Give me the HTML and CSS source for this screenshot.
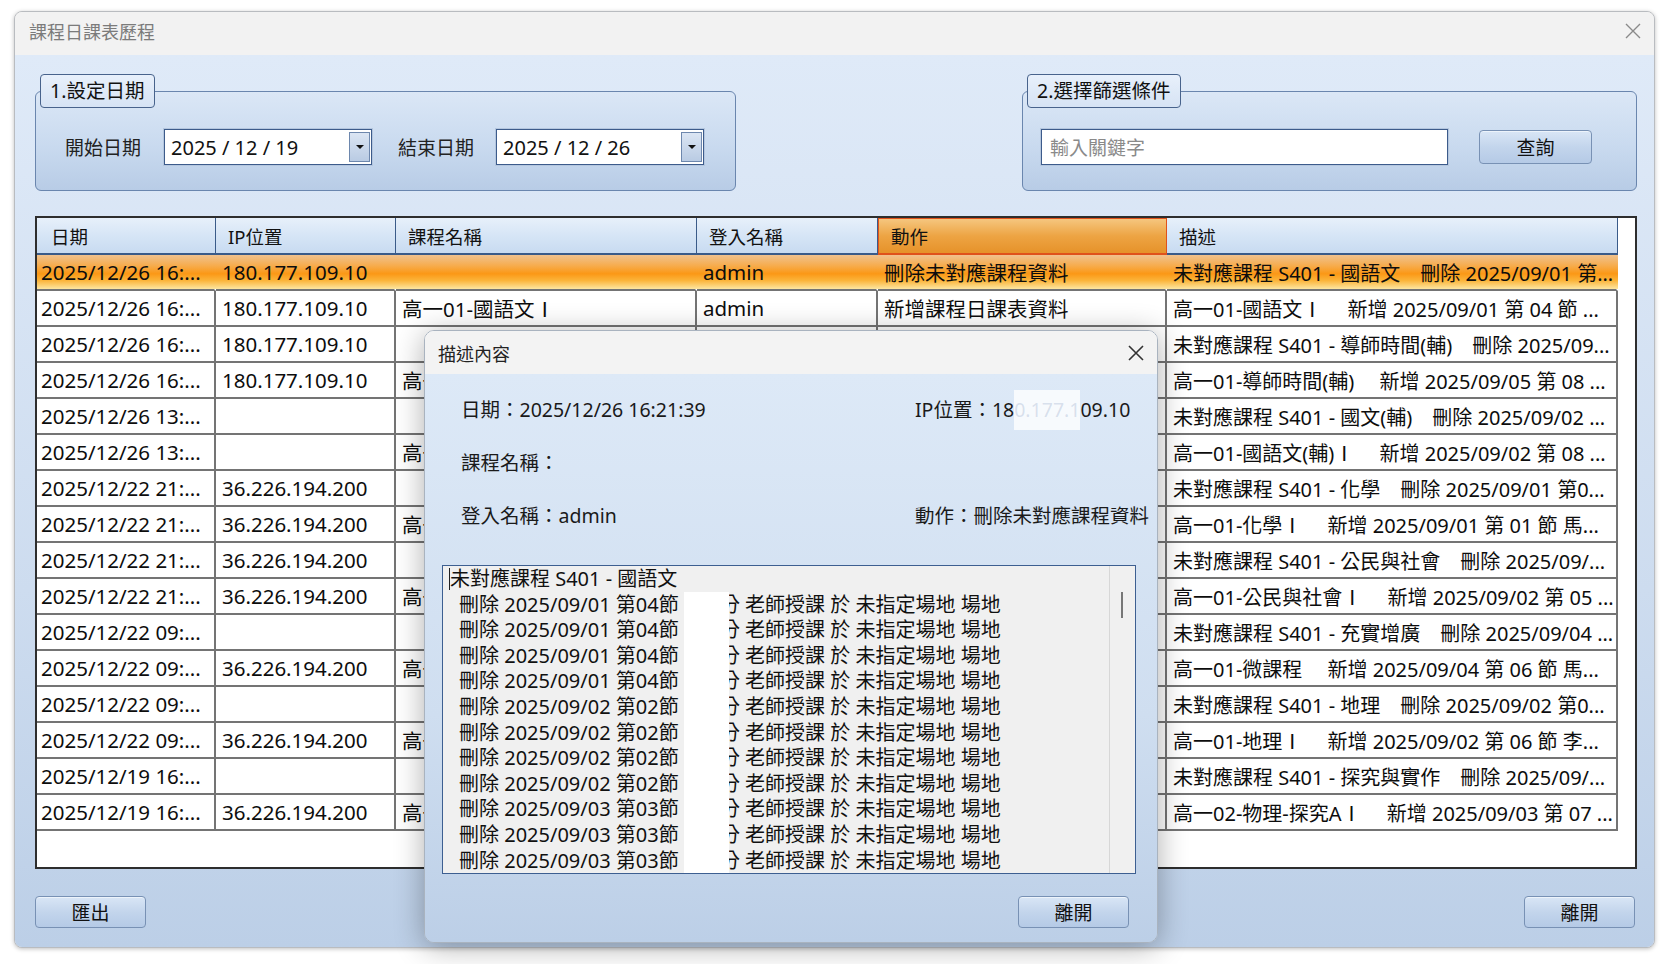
FILE: index.html
```html
<!DOCTYPE html>
<html lang="zh-Hant">
<head>
<meta charset="utf-8">
<title>課程日課表歷程</title>
<link rel="stylesheet" href="styles.css">
</head>
<body>
<div class="window">
  <div class="titlebar">
    <span>課程日課表歷程</span>
    <svg class="xbtn" width="18" height="18" viewBox="0 0 18 18"><path d="M2 2L16 16M16 2L2 16" stroke="#8a8a8a" stroke-width="1.4" fill="none"/></svg>
  </div>
  <div class="content">
    <div class="groups">
      <fieldset class="group g1">
        <legend>1.設定日期</legend>
        <div class="ginner">
          <span class="lbl l1">開始日期</span>
          <div class="date d1"><span>2025 / 12 / 19</span><span class="dd"><i></i></span></div>
          <span class="lbl l2">結束日期</span>
          <div class="date"><span>2025 / 12 / 26</span><span class="dd"><i></i></span></div>
        </div>
      </fieldset>
      <fieldset class="group g2">
        <legend>2.選擇篩選條件</legend>
        <div class="ginner g2inner">
          <div class="kw">輸入關鍵字</div>
          <div class="btn qbtn">查詢</div>
        </div>
      </fieldset>
    </div>

    <div class="grid">
      <table>
        <colgroup>
          <col class="c1"><col class="c2"><col class="c3"><col class="c4"><col class="c5"><col class="c6">
        </colgroup>
        <thead>
          <tr><th class="first">日期</th><th>IP位置</th><th>課程名稱</th><th>登入名稱</th><th class="sort">動作</th><th>描述</th></tr>
        </thead>
        <tbody>
          <tr class="sel"><td class="first">2025/12/26 16:...</td><td>180.177.109.10</td><td></td><td>admin</td><td>刪除未對應課程資料</td><td class="desc">未對應課程 S401 - 國語文　刪除 2025/09/01 第...</td></tr>
          <tr><td class="first">2025/12/26 16:...</td><td>180.177.109.10</td><td>高一01-國語文Ⅰ</td><td>admin</td><td>新增課程日課表資料</td><td class="desc">高一01-國語文Ⅰ　 新增 2025/09/01 第 04 節 ...</td></tr>
          <tr><td class="first">2025/12/26 16:...</td><td>180.177.109.10</td><td></td><td>admin</td><td>刪除未對應課程資料</td><td class="desc">未對應課程 S401 - 導師時間(輔)　刪除 2025/09...</td></tr>
          <tr><td class="first">2025/12/26 16:...</td><td>180.177.109.10</td><td>高一01-導師時間(輔)</td><td>admin</td><td>新增課程日課表資料</td><td class="desc">高一01-導師時間(輔)　 新增 2025/09/05 第 08 ...</td></tr>
          <tr><td class="first">2025/12/26 13:...</td><td></td><td></td><td>admin</td><td>刪除未對應課程資料</td><td class="desc">未對應課程 S401 - 國文(輔)　刪除 2025/09/02 ...</td></tr>
          <tr><td class="first">2025/12/26 13:...</td><td></td><td>高一01-國語文(輔)Ⅰ</td><td>admin</td><td>新增課程日課表資料</td><td class="desc">高一01-國語文(輔)Ⅰ　 新增 2025/09/02 第 08 ...</td></tr>
          <tr><td class="first">2025/12/22 21:...</td><td>36.226.194.200</td><td></td><td>admin</td><td>刪除未對應課程資料</td><td class="desc">未對應課程 S401 - 化學　刪除 2025/09/01 第0...</td></tr>
          <tr><td class="first">2025/12/22 21:...</td><td>36.226.194.200</td><td>高一01-化學Ⅰ</td><td>admin</td><td>新增課程日課表資料</td><td class="desc">高一01-化學Ⅰ　 新增 2025/09/01 第 01 節 馬...</td></tr>
          <tr><td class="first">2025/12/22 21:...</td><td>36.226.194.200</td><td></td><td>admin</td><td>刪除未對應課程資料</td><td class="desc">未對應課程 S401 - 公民與社會　刪除 2025/09/...</td></tr>
          <tr><td class="first">2025/12/22 21:...</td><td>36.226.194.200</td><td>高一01-公民與社會Ⅰ</td><td>admin</td><td>新增課程日課表資料</td><td class="desc">高一01-公民與社會Ⅰ　 新增 2025/09/02 第 05 ...</td></tr>
          <tr><td class="first">2025/12/22 09:...</td><td></td><td></td><td>admin</td><td>刪除未對應課程資料</td><td class="desc">未對應課程 S401 - 充實增廣　刪除 2025/09/04 ...</td></tr>
          <tr><td class="first">2025/12/22 09:...</td><td>36.226.194.200</td><td>高一01-微課程</td><td>admin</td><td>新增課程日課表資料</td><td class="desc">高一01-微課程　 新增 2025/09/04 第 06 節 馬...</td></tr>
          <tr><td class="first">2025/12/22 09:...</td><td></td><td></td><td>admin</td><td>刪除未對應課程資料</td><td class="desc">未對應課程 S401 - 地理　刪除 2025/09/02 第0...</td></tr>
          <tr><td class="first">2025/12/22 09:...</td><td>36.226.194.200</td><td>高一01-地理Ⅰ</td><td>admin</td><td>新增課程日課表資料</td><td class="desc">高一01-地理Ⅰ　 新增 2025/09/02 第 06 節 李...</td></tr>
          <tr><td class="first">2025/12/19 16:...</td><td></td><td></td><td>admin</td><td>刪除未對應課程資料</td><td class="desc">未對應課程 S401 - 探究與實作　刪除 2025/09/...</td></tr>
          <tr><td class="first">2025/12/19 16:...</td><td>36.226.194.200</td><td>高一02-物理-探究A</td><td>admin</td><td>新增課程日課表資料</td><td class="desc">高一02-物理-探究AⅠ　 新增 2025/09/03 第 07 ...</td></tr>
        </tbody>
      </table>
    </div>

    <div class="bottombar">
      <div class="btn">匯出</div>
      <div class="btn">離開</div>
    </div>
  </div>
</div>

<div class="dialog">
  <div class="dlg-title">
    <span>描述內容</span>
    <svg width="18" height="18" viewBox="0 0 18 18"><path d="M2 2L16 16M16 2L2 16" stroke="#333" stroke-width="1.6" fill="none"/></svg>
  </div>
  <div class="dlg-body">
    <div class="info">
      <div>日期：2025/12/26 16:21:39</div>
      <div>IP位置：18<span class="redact">0.177.1</span>09.10</div>
      <div>課程名稱：</div>
      <div></div>
      <div>登入名稱：admin</div>
      <div>動作：刪除未對應課程資料</div>
    </div>
    <div class="textbox">
      <div class="tb-text">
        <div class="tb-line head"><span class="caret"></span>未對應課程 S401 - 國語文</div>
        <div class="tb-line">刪除 2025/09/01 第04節 <span class="wb"></span>分 老師授課 於 未指定場地 場地</div>
        <div class="tb-line">刪除 2025/09/01 第04節 <span class="wb"></span>分 老師授課 於 未指定場地 場地</div>
        <div class="tb-line">刪除 2025/09/01 第04節 <span class="wb"></span>分 老師授課 於 未指定場地 場地</div>
        <div class="tb-line">刪除 2025/09/01 第04節 <span class="wb"></span>分 老師授課 於 未指定場地 場地</div>
        <div class="tb-line">刪除 2025/09/02 第02節 <span class="wb"></span>分 老師授課 於 未指定場地 場地</div>
        <div class="tb-line">刪除 2025/09/02 第02節 <span class="wb"></span>分 老師授課 於 未指定場地 場地</div>
        <div class="tb-line">刪除 2025/09/02 第02節 <span class="wb"></span>分 老師授課 於 未指定場地 場地</div>
        <div class="tb-line">刪除 2025/09/02 第02節 <span class="wb"></span>分 老師授課 於 未指定場地 場地</div>
        <div class="tb-line">刪除 2025/09/03 第03節 <span class="wb"></span>分 老師授課 於 未指定場地 場地</div>
        <div class="tb-line">刪除 2025/09/03 第03節 <span class="wb"></span>分 老師授課 於 未指定場地 場地</div>
        <div class="tb-line">刪除 2025/09/03 第03節 <span class="wb"></span>分 老師授課 於 未指定場地 場地</div>
      </div>
      <div class="tb-scroll"><div class="thumb"></div></div>
    </div>
    <div class="dlg-foot">
      <div class="btn">離開</div>
    </div>
  </div>
</div>
</body>
</html>
```

FILE: styles.css
```css
* { box-sizing: border-box; }
html, body { margin: 0; padding: 0; background: #fff; }
body {
  font-family: "Noto Sans", "Noto Sans CJK TC", sans-serif;
  color: #111;
  width: 1666px;
  height: 964px;
  position: relative;
  overflow: hidden;
}

.window {
  margin: 11px 0 0 14px;
  width: 1641px;
  height: 937px;
  border: 1px solid #b9bcc0;
  border-radius: 8px;
  overflow: hidden;
  background: #f2f2f2;
  box-shadow: 0 1px 4px rgba(0,0,0,.25);
  display: flex;
  flex-direction: column;
}
.titlebar {
  height: 43px;
  flex: none;
  display: flex;
  align-items: center;
  justify-content: space-between;
  padding: 0 12px 5px 14px;
  font-size: 18px;
  color: #7b7b7b;
  background: #f2f2f2;
}
.content {
  flex: 1;
  background: linear-gradient(#dfeaf8, #cddcef 60%, #bccfe7);
  padding: 19px 17px 0 20px;
  display: flex;
  flex-direction: column;
}

/* group boxes */
.groups { display: flex; justify-content: space-between; height: 117px; flex: none; }
.group {
  margin: 0;
  padding: 0;
  height: 117px;
  min-width: 0;
  border: 1px solid #6a86ae;
  border-radius: 6px;
  background: linear-gradient(#dbe7f6, #c9daef 55%, #b8cce6);
}
.g1 { width: 701px; }
.g2 { width: 615px; }
.group legend {
  margin-left: 4px;
  padding: 0 10px 0 9px;
  height: 34px;
  line-height: 31px;
  border: 1px solid #48638c;
  border-radius: 4px;
  background: linear-gradient(#e8f0fb, #d6e3f4);
  font-size: 19.5px;
  color: #111;
}
.ginner { display: flex; align-items: center; padding: 21px 0 0 29px; }
.lbl { font-size: 19px; color: #222; }
.l1 { margin-right: 23px; }
.l2 { margin-right: 22px; }
.d1 { margin-right: 26px; }
.date {
  width: 208px;
  height: 36px;
  background: #fff;
  border: 1px solid #3c5b8b;
  box-shadow: 0 0 0 1px #b4c6de;
  display: flex;
  align-items: center;
  justify-content: space-between;
  padding: 0 1px 0 6px;
  font-size: 20px;
  color: #111;
}
.dd {
  width: 21px;
  height: 30px;
  border: 1px solid #6d87ad;
  background: linear-gradient(#dbe5f3, #b9cbe3);
  display: flex;
  align-items: center;
  justify-content: center;
}
.dd i {
  width: 0; height: 0;
  border-left: 4px solid transparent;
  border-right: 4px solid transparent;
  border-top: 4px solid #111;
}
.g2inner { padding-left: 18px; }
.kw {
  width: 407px;
  height: 36px;
  background: #fff;
  border: 1px solid #3c5b8b;
  box-shadow: 0 0 0 1px #b4c6de;
  font-size: 19px;
  color: #8a8a8a;
  display: flex;
  align-items: center;
  padding-left: 8px;
}
.btn {
  width: 111px;
  height: 32px;
  border: 1px solid #7891b4;
  border-radius: 4px;
  background: linear-gradient(#d9e6f6, #c3d5ec 50%, #b5cae6);
  box-shadow: inset 0 1px 0 rgba(255,255,255,.55);
  font-size: 19px;
  color: #111;
  display: flex;
  align-items: center;
  justify-content: center;
}
.qbtn { margin-left: 31px; width: 113px; height: 34px; }

/* grid */
.grid {
  margin-top: 25px;
  height: 653px;
  flex: none;
  border: 2px solid #2e2e2e;
  background: #fff;
  overflow: hidden;
}
table { border-collapse: separate; border-spacing: 0; table-layout: fixed; width: 1581px; }
col.c1 { width: 179px; }
col.c2 { width: 180px; }
col.c3 { width: 301px; }
col.c4 { width: 181px; }
col.c5 { width: 289px; }
col.c6 { width: 451px; }
th {
  height: 37px;
  text-align: left;
  font-weight: normal;
  font-size: 18.5px;
  color: #111;
  padding: 0 0 0 12px;
  background: linear-gradient(#e7f0fa, #d6e5f6 50%, #c8dbf1);
  border-right: 1px solid #3a5b89;
  border-bottom: 2px solid #3a5b89;
}
th.first { padding-left: 14px; }
th.sort {
  background: linear-gradient(#f5c67f, #eda443 50%, #e6922a);
  border: 1px solid #e0521b;
  border-bottom: 2px solid #e0521b;
}
td {
  height: 36px;
  padding: 0 0 0 6px;
  font-size: 20.5px;
  color: #0d0d0d;
  white-space: pre;
  overflow: hidden;
  text-overflow: ellipsis;
  border-right: 2px solid #747474;
  border-bottom: 2px solid #747474;
}
td.first { padding-left: 4px; }
td.desc { font-size: 20px; }
tr.sel td {
  background: linear-gradient(#f0c28e 0%, #f6ad50 30%, #fb9816 55%, #fbb43a 75%, #fde6a0 100%);
  border-right-color: transparent;
}

.bottombar {
  margin-top: 27px;
  display: flex;
  justify-content: space-between;
  padding-right: 2px;
}

/* dialog */
.dialog {
  position: absolute;
  left: 424px;
  top: 330px;
  width: 734px;
  height: 613px;
  border: 1px solid #a9b3bf;
  border-radius: 10px;
  overflow: hidden;
  box-shadow: 0 4px 30px rgba(0,0,0,.32);
  display: flex;
  flex-direction: column;
}
.dlg-title {
  height: 43px;
  flex: none;
  background: #f3f3f3;
  display: flex;
  justify-content: space-between;
  align-items: center;
  padding: 0 12px 0 13px;
  font-size: 18px;
  color: #222;
}
.dlg-body {
  flex: 1;
  background: linear-gradient(#dde9f7, #cfdef0 60%, #bccfe7);
  padding: 23px 0 0 17px;
  display: flex;
  flex-direction: column;
}
.info {
  display: grid;
  grid-template-columns: 454px auto;
  row-gap: 27px;
  padding-left: 19px;
  font-size: 19.5px;
  line-height: 26px;
  color: #1a1a1a;
  flex: none;
}
.redact {
  display: inline-block;
  height: 26px;
  vertical-align: top;
  background: #f7fafd;
  box-shadow: 0 -7px 0 #f7fafd, 0 7px 0 #f7fafd;
  color: rgba(140,160,195,.3);
}
.textbox {
  margin-top: 36px;
  width: 694px;
  height: 309px;
  border: 1px solid #3d5f91;
  background: #f0f0f0;
  display: flex;
  flex: none;
}
.tb-text {
  flex: 1;
  overflow: hidden;
  font-size: 20px;
  line-height: 25.6px;
  white-space: nowrap;
  color: #111;
}
.tb-line { padding-left: 16px; height: 25.6px; white-space: nowrap; }
.tb-line.head { padding-left: 6px; }
.caret {
  display: inline-block;
  width: 1px;
  height: 22px;
  background: #222;
  vertical-align: -4px;
}
.wb {
  display: inline-block;
  width: 45px;
  height: 25.6px;
  background: #fff;
  vertical-align: top;
  margin-right: -9px;
  position: relative;
  z-index: 1;
}
.tb-scroll { width: 26px; border-left: 1px solid #d7d7d7; flex: none; }
.thumb { width: 2px; height: 26px; background: #777; margin: 26px 0 0 11px; }
.dlg-foot {
  display: flex;
  justify-content: flex-end;
  padding-right: 28px;
  margin-top: 22px;
}
```
